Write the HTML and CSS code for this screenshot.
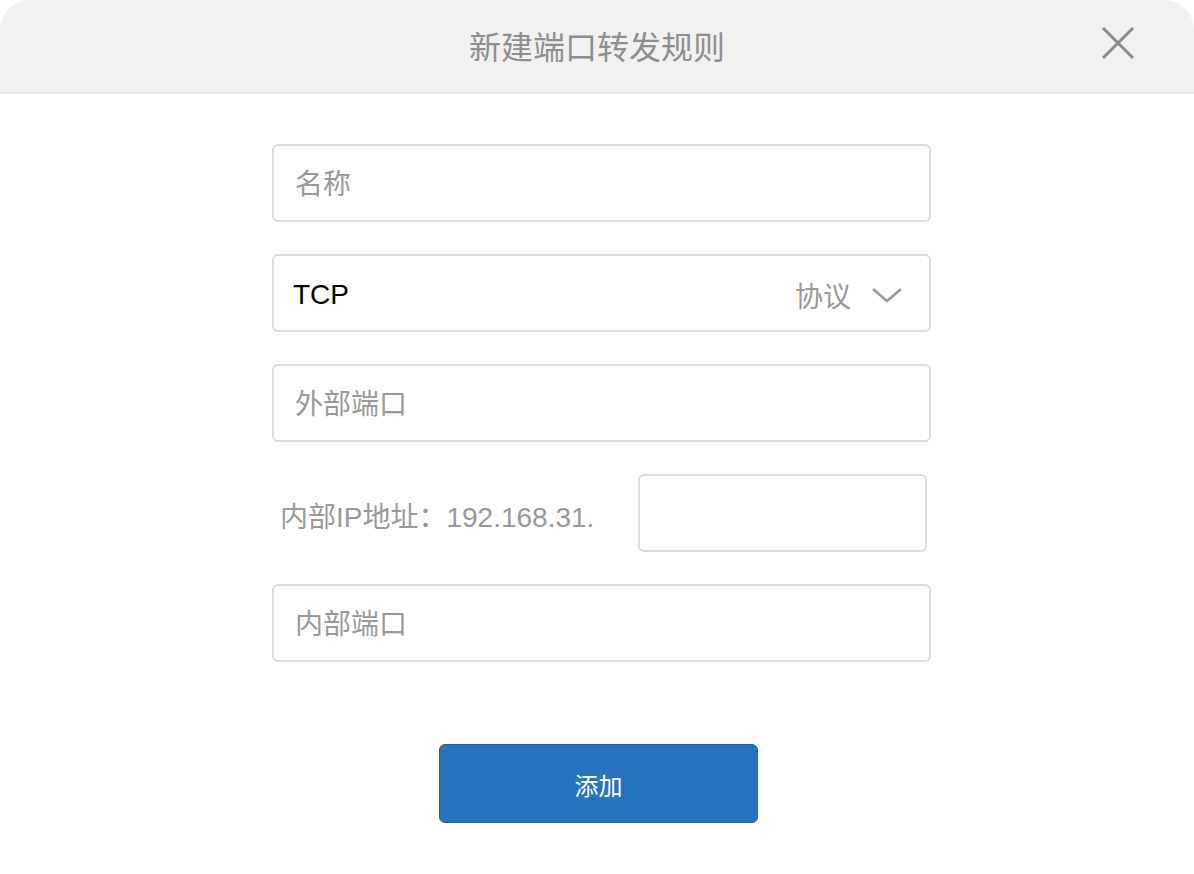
FILE: index.html
```html
<!DOCTYPE html>
<html>
<head>
    <title>新建端口转发规则</title>
    <meta name="viewport" content="width=device-width, initial-scale=1.0">
    <link rel="stylesheet" href="styles.css">
</head>
<body>
    <div class="dialog">
        <div class="dialog-header">
            <h1>新建端口转发规则</h1>
            <button class="close" aria-label="关闭">
                <svg width="34" height="34" viewBox="0 0 34 34">
                    <path d="M2 2 L32 32 M32 2 L2 32" stroke="#8a8a8a" stroke-width="3" fill="none"/>
                </svg>
            </button>
        </div>
        <form class="form">
            <input class="field" type="text" placeholder="名称">
            <div class="field select">
                <span class="select-value">TCP</span>
                <span class="select-label">协议</span>
                <svg class="chevron" width="32" height="16" viewBox="0 0 32 16">
                    <path d="M2 2 L16 14 L30 2" stroke="#9a9a9a" stroke-width="2.5" fill="none"/>
                </svg>
            </div>
            <input class="field" type="text" placeholder="外部端口">
            <div class="ip-row">
                <label class="ip-label">内部IP地址：192.168.31.</label>
                <input class="field ip-input" type="text">
            </div>
            <input class="field" type="text" placeholder="内部端口">
            <button type="button" class="submit">添加</button>
        </form>
    </div>
</body>
</html>
```

FILE: styles.css
```css
:root {
    --muted: #999;
    --border: #dcdcdc;
    --primary: #2773c0;
    --primary-dark: #1c5ea8;
    --radius: 6px;
}

body {
    margin: 0;
    background: white;
    font-family: 'Liberation Sans', 'Noto Sans CJK SC', sans-serif;
}

.dialog {
    width: 1194px;
    min-height: 874px;
    background: white;
}

.dialog-header {
    height: 92px;
    background: #f1f1f1;
    border-bottom: 2px solid #e6e6e6;
    border-radius: 30px 30px 0 0;
    display: flex;
    align-items: center;
    justify-content: center;
    position: relative;
}

h1 {
    margin: 0 0 3px;
    font-size: 32px;
    font-weight: normal;
    color: #8e8e8e;
}

.close {
    position: absolute;
    right: 59px;
    top: 26px;
    border: none;
    background: none;
    padding: 0;
    width: 34px;
    height: 34px;
    cursor: pointer;
}

.form {
    width: 659px;
    margin: 50px 0 0 272px;
    display: flex;
    flex-direction: column;
    gap: 32px;
}

.field {
    box-sizing: border-box;
    height: 78px;
    border: 2px solid var(--border);
    border-radius: var(--radius);
    padding: 3px 21px 0;
    font-family: inherit;
    font-size: 28px;
    color: #000;
    background: white;
    outline: none;
}

.field::placeholder {
    color: var(--muted);
}

.select {
    display: flex;
    align-items: center;
    padding-right: 26px;
    padding-left: 19px;
}

.select-value {
    flex: 1;
}

.select-label {
    color: var(--muted);
    margin-right: 20px;
}

.ip-row {
    display: flex;
    align-items: center;
    justify-content: space-between;
    padding-left: 8px;
    padding-right: 4px;
}

.ip-label {
    font-size: 28px;
    color: var(--muted);
    padding-top: 3px;
}

.ip-input {
    width: 289px;
}

.submit {
    width: 319px;
    height: 79px;
    margin: 50px 0 0 167px;
    padding-top: 2px;
    background: var(--primary);
    border: 1px solid var(--primary-dark);
    border-radius: var(--radius);
    color: white;
    font-family: inherit;
    font-size: 24px;
    cursor: pointer;
}
```
